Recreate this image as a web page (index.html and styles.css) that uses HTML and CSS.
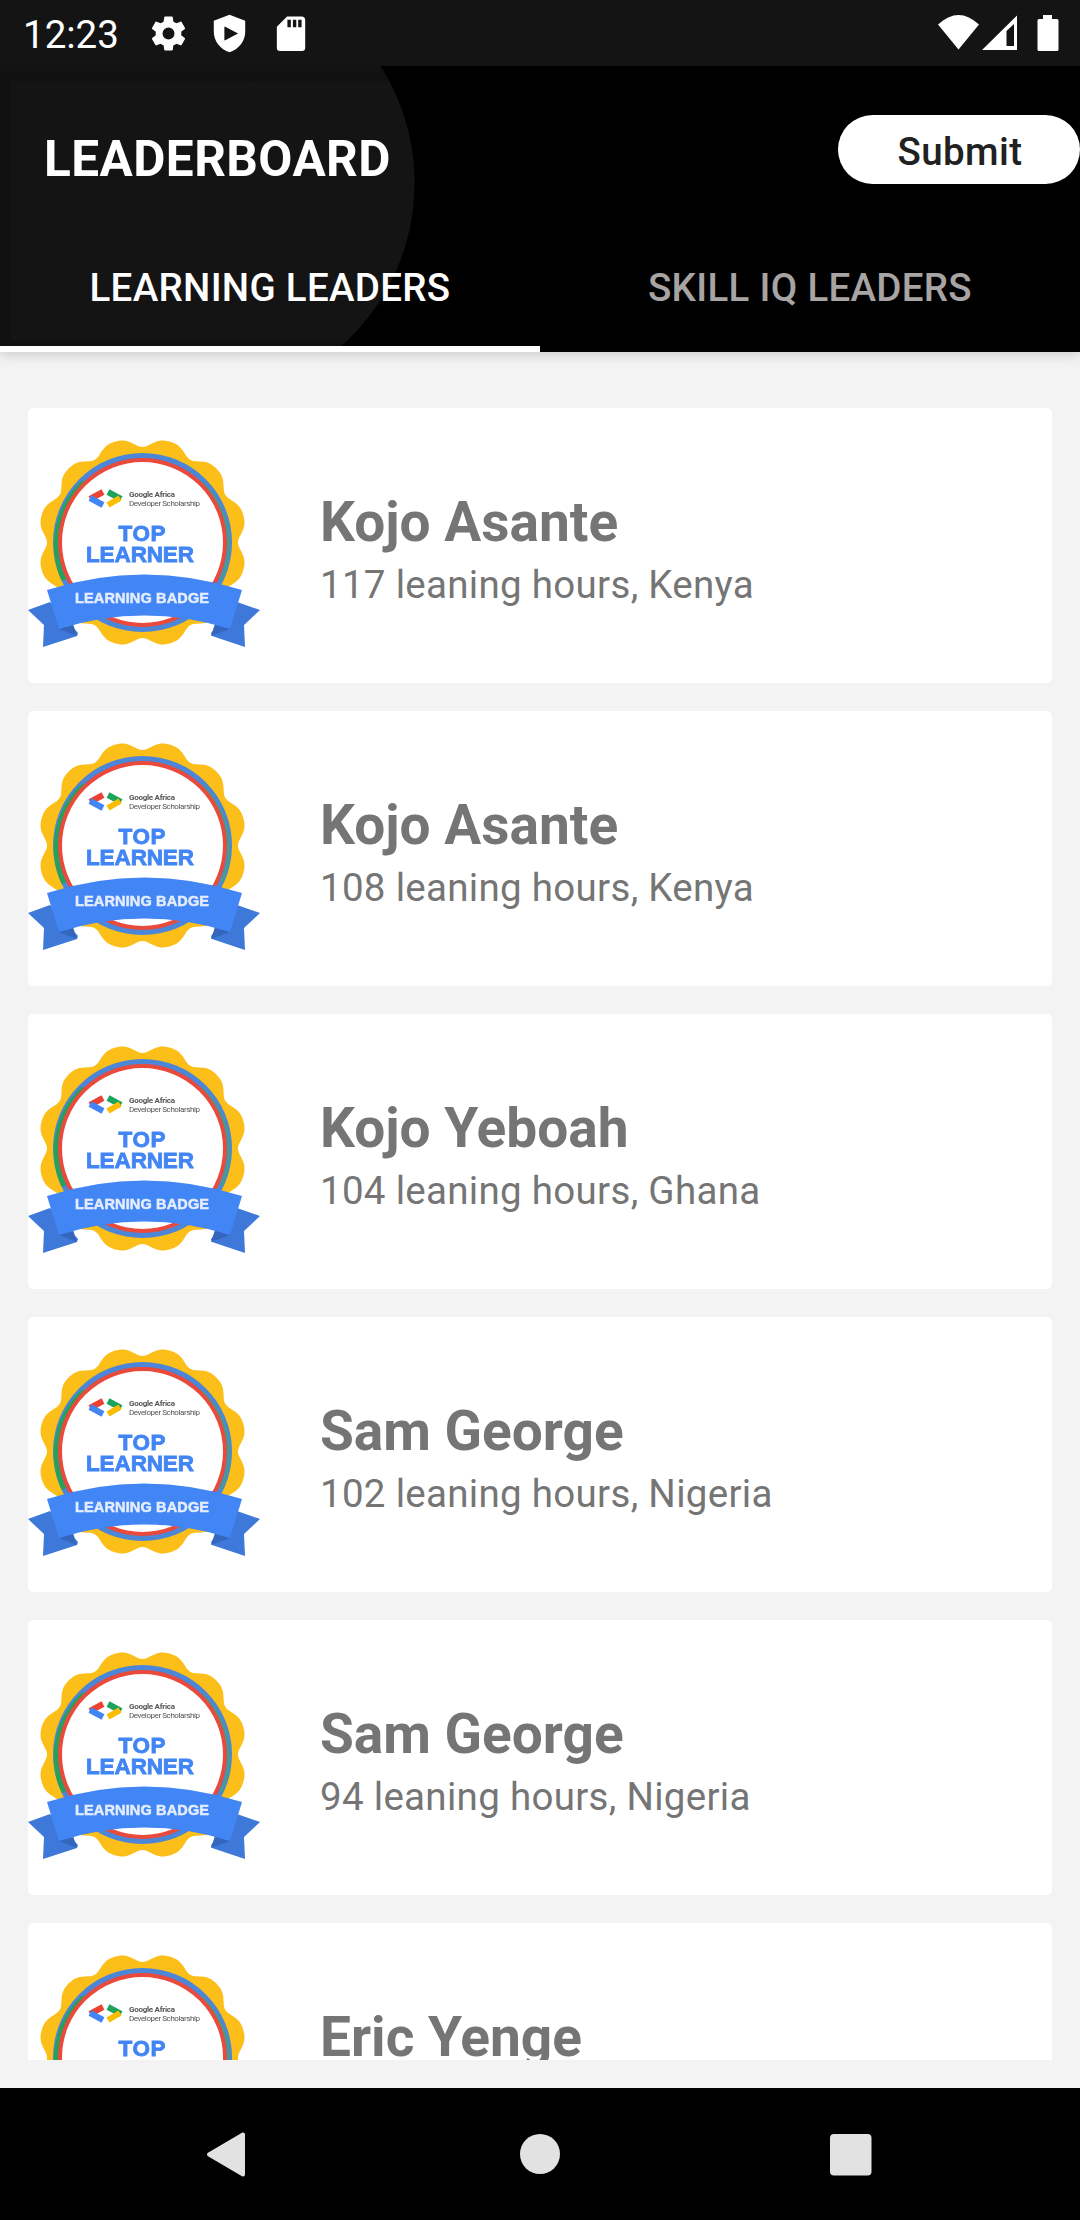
FILE: index.html
```html
<!DOCTYPE html>
<html lang="en">
<head>
<meta charset="utf-8">
<title>Leaderboard</title>
<link rel="stylesheet" href="styles.css">
</head>
<body>
<svg width="0" height="0" class="defs" aria-hidden="true">
  <defs>
    <symbol id="badge" viewBox="0 0 232 275">
      <g>
        <path id="seal" fill="#fcbe18" d=""/>
        <circle cx="114.500" cy="134.500" r="89.500" fill="#4c86d8"/>
        <path d="M56 74A85 85 0 0 0 36 172" fill="none" stroke="#27a05b" stroke-width="5"/>
        <path d="M173 74A85 85 0 0 1 193 172" fill="none" stroke="#459b91" stroke-width="3"/>
        <circle cx="114.500" cy="134.500" r="82.500" fill="#fff" stroke="#e94a3b" stroke-width="4"/>
        <path d="M0 202L22 194L50 225L49 228L15 239L16 217Z" fill="#3e78d8"/>
        <path d="M232 202L209 194L183 225L184 228L217 239L216 217Z" fill="#3e78d8"/>
        <path d="M31 221L45 216L49 228Z" fill="#3466bd"/>
        <path d="M202 221L187 216L183 228Z" fill="#3466bd"/>
        <path d="M19 182Q116 151 214 182L202 221Q116 194 31 221Z" fill="#4285f4"/>
        <g fill="none" stroke-width="6">
          <path d="M75 84L62 91" stroke="#ea4335"/>
          <path d="M62 90L75 97" stroke="#4285f4"/>
          <path d="M80 84L93 91" stroke="#1da45c"/>
          <path d="M92 90L80 97" stroke="#fbbc04"/>
        </g>
        <g class="tiny"><text x="101" y="89" textLength="46" class="tiny-bold">Google Africa</text><text x="101" y="98" textLength="71">Developer Scholarship</text></g>
        <text x="114" y="133" textLength="47" class="top">TOP</text>
        <text x="112" y="153.500" textLength="108" class="top">LEARNER</text>
        <text x="114" y="194.500" textLength="134" class="ribbon">LEARNING BADGE</text>
      </g>
    </symbol>
  </defs>
</svg>
<div class="screen">
  <header class="status">
    <span class="clock">12:23</span>
    <svg class="status-icon" viewBox="0 0 24 24"><path fill-rule="evenodd" d="M19.430 12.980c.04-.32.07-.64.07-.98s-.03-.66-.07-.98l2.110-1.650c.19-.15.24-.42.12-.64l-2-3.460c-.12-.22-.39-.3-.61-.22l-2.490 1c-.52-.4-1.080-.73-1.690-.98l-.38-2.650C14.460 2.180 14.250 2 14 2h-4c-.25 0-.46.18-.49.42l-.38 2.650c-.61.25-1.170.59-1.690.98l-2.490-1c-.23-.09-.49 0-.61.22l-2 3.460c-.13.22-.07.49.12.64l2.110 1.650c-.04.32-.07.65-.07.98s.03.66.07.98l-2.110 1.650c-.19.15-.24.42-.12.64l2 3.460c.12.22.39.3.61.22l2.490-1c.52.4 1.080.73 1.690.98l.38 2.650c.03.24.24.42.49.42h4c.25 0 .46-.18.49-.42l.38-2.650c.61-.25 1.170-.59 1.690-.98l2.490 1c.23.09.49 0 .61-.22l2-3.460c.12-.22.07-.49-.12-.64zM12 15.500a3.500 3.500 0 1 1 0-7 3.500 3.500 0 0 1 0 7z"/></svg>
    <svg class="status-icon" viewBox="0 0 24 24"><path fill-rule="evenodd" d="M12 1L2.800 4.600V11c0 5.500 3.900 10.400 9.200 12 5.300-1.600 9.200-6.500 9.200-12V4.600zM9 8.200Q9 7.800 9.500 8L17 12L9.500 16Q9 16.200 9 15.800z"/></svg>
    <svg class="status-icon" viewBox="0 0 24 24"><path fill-rule="evenodd" d="M18.500 2H10L4 8v12.500c0 1.100.7 1.800 1.800 1.800h13c1.100 0 1.800-.7 1.800-1.800V4c0-1.200-.8-2-2.100-2zM10.200 4h2v4.300h-2zM13.400 4h2v4.300h-2zM16.500 4h2v4.300h-2z"/></svg>
    <svg class="signals" viewBox="0 0 124 40"><path d="M0 11.500Q20.500-7.500 41 11.500L20.500 36.500Z"/><path fill-rule="evenodd" d="M44 37L79 2.500V37ZM68.500 18V33H76V11Z"/><path d="M105 2h9v4h5q1.500 0 1.500 1.500v29q0 1.500-1.500 1.500h-18q-1.500 0-1.500-1.500v-29q0-1.500 1.500-1.500h4z"/></svg>
  </header>
  <section class="appbar">
    <div class="titlebar"><h1>LEADERBOARD</h1><button class="submit">Submit</button></div>
    <nav class="tabs"><a class="tab active">LEARNING LEADERS</a><a class="tab">SKILL IQ LEADERS</a></nav>
  </section>
  <main class="list" id="list"></main>
  <footer class="navbar">
    <svg viewBox="0 0 44 56"><path d="M36 8.500V48.500L2 28.500Z" stroke="#e2e2e2" stroke-width="4" stroke-linejoin="round"/></svg>
    <svg viewBox="0 0 44 56"><circle cx="22" cy="28" r="20"/></svg>
    <svg viewBox="0 0 44 56"><rect x="1" y="8" width="41.500" height="41.500" rx="4"/></svg>
  </footer>
</div>
<script src="app.js"></script>
</body>
</html>
```
FILE: styles.css
```css
* { box-sizing: border-box; }
body { margin: 0; font-family: Roboto, "Liberation Sans", sans-serif; }
.defs { position: absolute; }
.screen { width: 1080px; height: 2220px; display: flex; flex-direction: column; background: #f3f3f3; overflow: hidden; }
.status { height: 66px; flex: none; background: #141414; color: #fff; display: flex; align-items: center; padding: 0 18px 0 23px; }
.clock { font-size: 38.500px; width: 125px; line-height: 66px; padding-top: 3px; }
.status-icon { width: 41px; height: 41px; margin-right: 20px; fill: #fff; }
.signals { width: 124px; height: 40px; margin-left: auto; fill: #fff; }
.appbar { height: 286px; flex: none; display: flex; flex-direction: column; color: #fff; box-shadow: 0 3px 11px rgba(0,0,0,.16);
  background:
    linear-gradient(rgba(0,0,0,.05), rgba(0,0,0,.2)) 0 0 / 415px 15px no-repeat,
    linear-gradient(rgba(0,0,0,.16), rgba(0,0,0,.16)) 0 15px / 11px 259px no-repeat,
    linear-gradient(rgba(0,0,0,.16), rgba(0,0,0,.16)) 0 274px / 415px 12px no-repeat,
    linear-gradient(#141414, #141414) 0 0 / 197px 286px no-repeat,
    radial-gradient(circle 300px at 196.500px 117px, #141414 217.500px, transparent 218.500px),
    #000; }
.titlebar { height: 154px; flex: none; display: flex; justify-content: space-between; align-items: flex-start; padding: 49px 0 0 44px; }
h1 { margin: 15px 0 0; font-size: 49.500px; line-height: 58px; font-weight: 700; letter-spacing: .45px; }
.submit { width: 242px; height: 69px; border: 0; border-radius: 35px; background: #fff; color: #212121; font: 500 38.500px/67px Roboto, "Liberation Sans", sans-serif; letter-spacing: .4px; padding: 3px 0 0 2px; }
.tabs { flex: 1; display: flex; }
.tab { flex: 1; text-align: center; font-size: 38.500px; font-weight: 500; letter-spacing: .3px; line-height: 100px; padding-top: 18px; color: #a8a4a4; }
.tab.active { color: #fff; border-bottom: 6px solid #fff; }
.list { height: 1652px; margin: 56px 28px 28px; flex: none; overflow: hidden; display: flex; flex-direction: column; gap: 28px; }
.card { height: 275px; flex: none; background: #fff; border-radius: 5px; display: flex; color: #757575; }
.badge { width: 232px; height: 275px; margin-right: 60px; filter: blur(.7px); }
.info { padding-top: 82px; }
.name { margin: 0; font-size: 55px; line-height: 64px; font-weight: 700; }
.hours { margin: 0; font-size: 38.500px; line-height: 61px; letter-spacing: .3px; }
.tiny { font: 400 8px Roboto, sans-serif; fill: #555; }
.tiny-bold { font-weight: 700; }
.top { font: 700 22.500px "Liberation Sans", sans-serif; fill: #4285f4; stroke: #4285f4; stroke-width: .8px; text-anchor: middle; }
.ribbon { font: 700 14.500px "Liberation Sans", sans-serif; fill: #e4edfd; stroke: #e4edfd; stroke-width: .5px; text-anchor: middle; }
.navbar { height: 132px; flex: none; background: #000; display: flex; justify-content: center; align-items: center; gap: 267px; }
.navbar svg { width: 44px; height: 56px; fill: #e2e2e2; overflow: visible; }
```
FILE: app.js
```js
// Scalloped outline of the award seal.
const scallops = 12;
let outline = "";
for (let i = 0; i <= 360; i++) {
  const a = (i / 360) * Math.PI * 2;
  const r = 100.8 - 4.5 * Math.cos(a * scallops) - 0.8 * Math.cos(2 * a * scallops);
  const x = 114.5 + r * Math.sin(a);
  const y = 134.5 - r * Math.cos(a);
  outline += (i ? "L" : "M") + x.toFixed(2) + " " + y.toFixed(2);
}
document.getElementById("seal").setAttribute("d", outline + "Z");

const leaders = [
  ["Kojo Asante", 117, "Kenya"],
  ["Kojo Asante", 108, "Kenya"],
  ["Kojo Yeboah", 104, "Ghana"],
  ["Sam George", 102, "Nigeria"],
  ["Sam George", 94, "Nigeria"],
  ["Eric Yenge", 88, "Kenya"]
];
document.getElementById("list").innerHTML = leaders.map(([name, hours, country]) =>
  `<article class="card"><svg class="badge"><use href="#badge"/></svg><div class="info"><h2 class="name">${name}</h2><p class="hours">${hours} leaning hours, ${country}</p></div></article>`
).join("");
```
